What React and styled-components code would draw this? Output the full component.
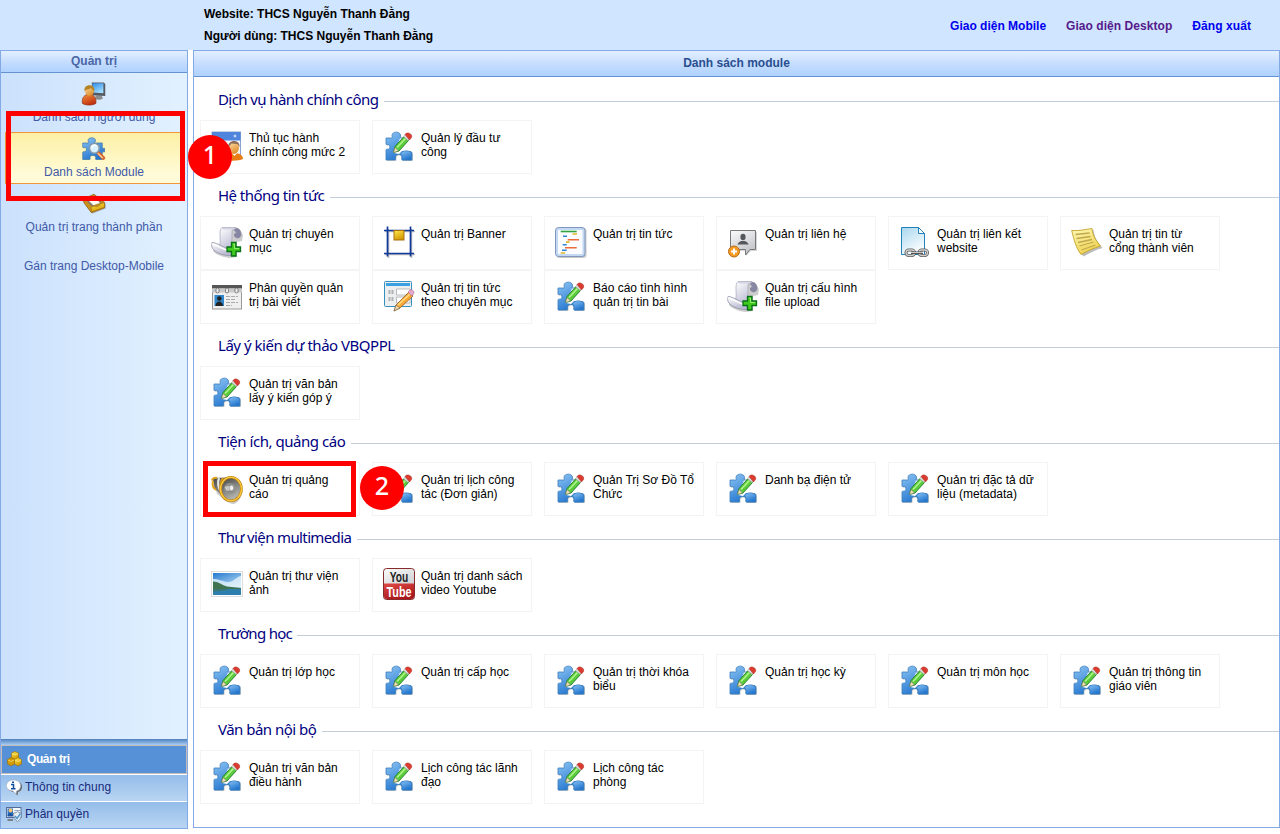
import React from "react";
import styled, { createGlobalStyle } from "styled-components";

const GlobalStyle = createGlobalStyle`
  *, *::before, *::after { box-sizing: border-box; }
  body { margin: 0; background: #fff; font: 12px/14px "Liberation Sans", Arial, sans-serif; color: #000; }
  a { text-decoration: none; color: inherit; }
`;

const Page = styled.div`
  position: relative;
  width: 1280px;
  height: 834px;
  overflow: hidden;
  display: flex;
  flex-direction: column;
`;
const Header = styled.header`
  height: 50px;
  flex: none;
  background: #d0e5ff;
  display: flex;
  justify-content: space-between;
  padding: 3px 29px 0 204px;
  font-weight: bold;
`;
const Identity = styled.div`
  line-height: 22px;
  white-space: nowrap;
`;
const Links = styled.nav`
  display: flex;
  gap: 20px;
  line-height: 46px;
`;
const HeaderLink = styled.a`
  color: ${(p) => (p.$visited ? "#551a8b" : "#0000ee")};
  letter-spacing: ${(p) => p.$track || 0}px;
`;
const Main = styled.div`
  display: flex;
  gap: 5px;
  align-items: flex-start;
`;
const Sidebar = styled.aside`
  width: 188px;
  height: 779px;
  flex: none;
  border: 1px solid #83aae6;
  display: flex;
  flex-direction: column;
`;
const PanelTitle = styled.h2`
  margin: 0;
  flex: none;
  height: ${(p) => p.$height}px;
  line-height: ${(p) => p.$line}px;
  border-bottom: 1px solid #6593cf;
  background: linear-gradient(#e3efff, #c4dcff 55%, #afd2ff);
  font-size: 12px;
  text-align: center;
  color: ${(p) => p.$color};
`;
const SideBody = styled.div`
  flex: 1;
  background: linear-gradient(90deg, #cbe1fc, #e2f1ff 100%);
  padding: 4px 4px 0;
  display: flex;
  flex-direction: column;
  gap: 3px;
`;
const SideItem = styled.a`
  height: ${(p) => (p.$plain ? 36 : 52)}px;
  padding-top: ${(p) => (p.$plain ? 16 : 4)}px;
  border: 1px solid ${(p) => (p.$active ? "#f29536" : "transparent")};
  background: ${(p) => (p.$active ? "linear-gradient(#fdf0a5, #fffbd9 85%)" : "none")};
  display: flex;
  flex-direction: column;
  align-items: center;
  gap: 4px;
  color: #4159a8;
`;
const Splitter = styled.div`
  height: 6px;
  background: linear-gradient(#4b80bd, #a9cdf4);
`;
const GroupTab = styled.a`
  height: ${(p) => (p.$active ? 29 : 27)}px;
  display: flex;
  align-items: center;
  gap: ${(p) => (p.$active ? 4 : 3)}px;
  letter-spacing: ${(p) => (p.$active ? -0.4 : 0)}px;
  padding: 0 0 2px 5px;
  border: solid ${(p) => (p.$active ? "#c5bcb5" : "#fff")};
  border-width: ${(p) => (p.$active ? "1px" : "1px 0 0")};
  background: ${(p) => (p.$active ? "#5690d6" : "linear-gradient(#94bdea, #b9d5f2)")};
  color: ${(p) => (p.$active ? "#fff" : "#18297c")};
  font-weight: ${(p) => (p.$active ? "bold" : "normal")};
`;
const Content = styled.main`
  flex: 1;
  height: 778px;
  border: 1px solid #83aae6;
  background: #fff;
`;
const Sections = styled.div`
  padding-top: 1px;
`;
const SectionTitle = styled.h3`
  height: 42px;
  margin: 0;
  padding: 1px 0 0 24px;
  display: flex;
  align-items: center;
  gap: 6px;
  font: 15px/20px "Noto Sans", "Open Sans", sans-serif;
  color: #000080;
  white-space: nowrap;
  &::after { content: ""; flex: 1; height: 1px; background: #c3cedc; margin-top: 4px; }
`;
const TitleText = styled.span`
  width: ${(p) => p.$width}px;
  letter-spacing: ${(p) => p.$track}px;
  margin-top: -2px;
`;
const Cards = styled.div`
  display: grid;
  grid-template-columns: repeat(6, 160px);
  column-gap: 12px;
  padding-left: 6px;
`;
const Card = styled.a`
  height: 54px;
  border: 1px solid #f4f4f4;
  padding: 9px 4px 0 10px;
  display: flex;
  gap: 6px;
`;
const CardText = styled.span`
  padding-top: 1px;
  white-space: pre-line;
`;
const Glyph = styled.svg`
  display: block;
  flex: none;
  overflow: visible;
`;
const Frame = styled.div`
  position: absolute;
  left: ${(p) => p.$x}px;
  top: ${(p) => p.$y}px;
  width: ${(p) => p.$w}px;
  height: ${(p) => p.$h}px;
  border: 5px solid #f00;
`;
const Badge = styled.div`
  position: absolute;
  left: ${(p) => p.$x}px;
  top: ${(p) => p.$y}px;
  width: 44px;
  height: 44px;
  border-radius: 50%;
  background: #f00;
  color: #fff;
  font: 500 25px/39px "Noto Sans", sans-serif;
  text-align: center;
`;
const Defs = styled.svg`
  position: absolute;
  width: 0;
  height: 0;
`;

const GRADIENTS = [
  ["blue", "#8cc4f4", "#2275cf"],
  ["gray", "#fbfbfb", "#c4c5c9"],
  ["scroll", "#ffffff", "#b9b9d2"],
  ["gold", "#ffe94d", "#d49a05"],
  ["orange", "#f7923b", "#bf3010"],
  ["skin", "#ffe3b4", "#e0912d"],
  ["screen", "#2f8ee8", "#9fdcff"],
  ["note", "#fffab8", "#f0d250"],
  ["doc", "#a9d7ee", "#fafdff"],
  ["dark", "#3f3f3f", "#b8b8b4"],
  ["red", "#e04a45", "#a9171c"],
  ["sky", "#2479cf", "#d6eefb"],
];

const PUZZLE_BODY = "M3 8h5.500c1.500 0 .5-1.500.5-2.500 0-4.500 8.500-4.500 8.500 0 0 1-1 2.500.5 2.500H27v8l-2 5c3 0 4 1 4 2.500V30h-9.500c-1 0-.5-1.500-.5-3 0-3.500-6.500-3.500-6.500 0 0 1.500.5 3-.5 3H3V20c0-1 1-.8 2-.8 2.500 0 2.500-4.700 0-4.700-1 0-2 .5-2-.5z";

const Puzzle = () => (
  <g>
    <path d={PUZZLE_BODY} fill="#666" opacity=".32" transform="translate(.9 1)" />
    <path d={PUZZLE_BODY} fill="url(#g-blue)" stroke="#3b7cba" strokeWidth=".8" />
    <path d="M17 8.600h11.500l.5 12.400H19l-3 3-5-1z" fill="#fff" />
    <path d="M18.500 22.500c3-2.500 8-2 10 .5V30h-9c-1 0-.5-1.500-.5-3 0-1.500-.5-2.500-1.500-3z" fill="url(#g-blue)" stroke="#3b7cba" strokeWidth=".7" />
    <path d="M10.500 22.500l1.500-6L21 6.500l4.500 4-9.500 10.500z" fill="#5bcb3e" stroke="#237c28" strokeWidth=".9" />
    <path d="M14 17.500l8.500-9" stroke="#b0f588" strokeWidth="1.600" />
    <path d="M10.500 22.500l1.500-5 3.500 3.300z" fill="#f5dfae" stroke="#777" strokeWidth=".5" />
    <path d="M20.500 6.500l2-2 4.500 4-2 2z" fill="#ddd" stroke="#999" strokeWidth=".5" />
    <path d="M22 4.500c2-3.500 8-.5 6.500 3L26.500 10z" fill="#dc3c2e" stroke="#a22f25" strokeWidth=".5" />
  </g>
);

const ICONS = {
  puzzle: Puzzle,
  procedure: () => (
    <g>
      <rect x="1" y="2" width="28.500" height="27" fill="#f2f5fa" stroke="#8ba3cf" />
      <rect x="1" y="2" width="28.500" height="8.500" fill="#4f85dc" />
      <path d="M24 4.500v3M22.500 6h3" stroke="#fff" strokeWidth=".8" />
      <path d="M14 30c0-5 4-7 9-7s9 2 9 6c-4 2-12 2-18 1z" fill="#e87d16" />
      <path d="M20 22h7l-3.500 4z" fill="#fff" />
      <ellipse cx="23" cy="17.500" rx="5" ry="6.500" fill="url(#g-skin)" />
      <path d="M17.500 17c-1-8 12-8 11 0l-2-3-6-.5z" fill="#8d6c58" />
    </g>
  ),
  scroll: () => (
    <g>
      <path d="M1 19l7-1L9 3l18-1 4 6-1 6-5 1v15l-8 1C10 30 3 27 1 24z" fill="#555" opacity=".3" transform="translate(1 1)" />
      <path d="M22 3c6-3 9 3 7.500 7-1.500 3-6 2-6-1 0-2 2-2.500 3-1" fill="#8787a5" stroke="#7d7d99" strokeWidth=".8" />
      <path d="M8.500 20C10.500 13 7 5 11 1.500h14c-5 1-4 5-4 9 0 7-1 10-1 16z" fill="url(#g-scroll)" stroke="#a5a5bb" strokeWidth=".7" />
      <path d="M11 2h14l-2 1.500H12z" fill="#d4d4e2" />
      <path d="M1 16.500c5 0 13 6 19 7v6C12 30 2 26 .7 20.500z" fill="url(#g-scroll)" stroke="#9292ab" strokeWidth=".8" />
      <path d="M1 18c5 1 11 6 18 7" fill="none" stroke="#fff" strokeWidth="1.500" />
      <path d="M20.500 16.500h4.500V21h4.500v4.500H25V30h-4.500v-4.500H16V21h4.500z" fill="#3fca1c" stroke="#087018" strokeWidth="1.300" />
      <path d="M22 18h1.500v4.500H28" fill="none" stroke="#97ee70" />
    </g>
  ),
  banner: () => (
    <g fill="none">
      <path d="M4.500 2v29M27.500 2v29M1 4.500h30M1 27.500h30" stroke="#bbb" strokeWidth="1.500" transform="translate(1 1)" />
      <path d="M4.500 .5v30M27.500 .5v30M1 4.500h30M1 27.500h30" stroke="#113b9b" strokeWidth="1.700" />
      <rect x="11" y="4.500" width="10" height="9.500" fill="url(#g-gold)" stroke="#a96e10" />
    </g>
  ),
  news: () => (
    <g>
      <rect x="1.500" y="2" width="30" height="30" rx="3" fill="#888" opacity=".45" />
      <rect x=".5" y="1.500" width="29.500" height="29" rx="3" fill="#c3d8f3" stroke="#7f97bd" />
      <rect x="3" y="4" width="24.500" height="24" rx="1" fill="#fafcff" />
      <path d="M5.700 5.500h16" stroke="#2fa340" strokeWidth="1.600" />
      <path d="M8 10.300h4M7.700 18.700h4M7 24.300h4.700" stroke="#2c86d4" strokeWidth="1.600" />
      <path d="M12.700 13.700H24M10 21.700h11.700" stroke="#ec6a35" strokeWidth="1.600" />
      <path d="M17.500 8h4.500M11 16.200h3.500M5.700 27h4.500" stroke="#e2b62d" strokeWidth="1.700" />
    </g>
  ),
  contact: () => (
    <g>
      <path d="M3 5h26v19h-6l-5 5v-5H3z" fill="#888" opacity=".35" transform="translate(1 1)" />
      <path d="M3.500 4.500h25v19H23L18.500 29v-5.500h-15z" fill="url(#g-gray)" stroke="#77797d" />
      <ellipse cx="16" cy="11" rx="2.600" ry="3.200" fill="#54575b" />
      <path d="M10.500 18.500c0-1.500 2-3 4-3.500h3c2 .5 4 2 4 3.500z" fill="#54575b" />
      <circle cx="7" cy="25.500" r="5.500" fill="#f69a24" stroke="#b96d1b" />
      <path d="M7 22.500v6M4 25.500h6" stroke="#fff" strokeWidth="2" />
    </g>
  ),
  link: () => (
    <g>
      <path d="M2.500 1.500h17l6 6v21h-23z" fill="url(#g-doc)" stroke="#2481b9" />
      <path d="M19.500 1.500v6h6z" fill="#fff" stroke="#2481b9" />
      <g fill="none" stroke="#5c5c5c" strokeWidth="3">
        <rect x="7" y="24" width="8.500" height="5.500" rx="2.700" />
        <rect x="20" y="24" width="8.500" height="5.500" rx="2.700" />
      </g>
      <g fill="none" stroke="#d0d0d0" strokeWidth="1.300">
        <rect x="7" y="24" width="8.500" height="5.500" rx="2.700" />
        <rect x="20" y="24" width="8.500" height="5.500" rx="2.700" />
      </g>
      <path d="M12 26.700h12" stroke="#505050" strokeWidth="2.500" />
      <path d="M12 26.500h12" stroke="#ccc" />
    </g>
  ),
  note: () => (
    <g>
      <path d="M1 4.500c8 1 13-1 20-1.500 1 8 4 12 9 18-7 2-13 5-19 8.500C6 24 2 16 1 4.500z" fill="#555" opacity=".4" transform="translate(1.500 1)" />
      <path d="M.7 4.500c8 .5 13-1 20.300-2 1 8 4 12 8.500 17.500-7 2-13 5-19.500 8.500C5 22 3 14 .7 4.500z" fill="url(#g-note)" stroke="#c2a428" strokeWidth=".9" />
      <path d="M4.500 8.500l14-1.500M5.500 12.500l14-2M7 16.500l14-3M8.500 20l14-4M10.500 24l14-5" fill="none" stroke="#bfa850" strokeWidth="1.300" />
    </g>
  ),
  permission: () => (
    <g>
      <rect x="1.500" y="5.500" width="29" height="23.500" fill="#efefef" stroke="#999" />
      <rect x="1" y="5" width="30" height="3.500" fill="#555" />
      <rect x="1" y="8.500" width="30" height="4" fill="#c9c9c9" />
      <g fill="#eee" stroke="#555" strokeWidth=".7"><rect x="5" y="8" width="3" height="5" rx="1.500" /><rect x="14.500" y="8" width="3" height="5" rx="1.500" /><rect x="24" y="8" width="3" height="5" rx="1.500" /></g>
      <rect x="3.500" y="15" width="9.500" height="11" fill="#3187cb" />
      <circle cx="8.300" cy="18.500" r="2.300" fill="#222" /><path d="M4.500 26c0-6 7.500-6 7.500 0z" fill="#222" />
      <path d="M15 16.500h12M15 19.500h10M15 22.500h12M15 25.500h6" stroke="#aaa" strokeDasharray="4 1" />
    </g>
  ),
  form: () => (
    <g>
      <rect x="1.500" y="1.500" width="27" height="25" rx="1" fill="#eceeef" stroke="#3490be" />
      <rect x="3" y="3" width="24" height="3" fill="#3aa0e2" />
      <path d="M13.500 9H27v6H13.500zM13.500 17H27v6H13.500z" fill="#fff" stroke="#bbb" />
      <path d="M5.500 11h5M5.500 13h5M5.500 18h5M5.500 20h5" stroke="#777" strokeDasharray="2 1" />
      <path d="M11 31l2-6L26 12l4 4-13 12z" fill="#f9a835" stroke="#965d25" strokeWidth=".8" />
      <path d="M15 25l12-11" stroke="#ffdf86" strokeWidth="1.300" />
      <path d="M11 31l2-6 4 3z" fill="#efd6a5" stroke="#555" strokeWidth=".5" />
      <path d="M25 12l2-2c3-1 5 2 3.500 4l-2 2z" fill="#e7a7cc" stroke="#966783" strokeWidth=".5" />
    </g>
  ),
  horn: () => (
    <g>
      <path d="M2 6l18 0c14 3 14 20 3 25-7 0-12-7-17-10z" fill="#555" opacity=".3" transform="translate(0 1)" />
      <path d="M2 6c5 0 11 .5 18-1v24C13 27 9 20 4 17z" fill="url(#g-dark)" stroke="#555" strokeWidth=".6" />
      <path d="M8 6c-1.500 4-1 9 2 14" fill="none" stroke="#e8e8e4" strokeWidth="2.200" />
      <path d="M1 8.500c0-2 2-3 5-2.500M2 9c-1 4 0 7 3 9" fill="none" stroke="#e3a51b" strokeWidth="2" />
      <path d="M12 6C8 12 9 20 15 27" fill="none" stroke="#e3a51b" strokeWidth="2" />
      <ellipse cx="20" cy="17" rx="10.500" ry="11.700" fill="url(#g-dark)" stroke="#b87805" strokeWidth="2.600" />
      <ellipse cx="20" cy="17" rx="10.500" ry="11.700" fill="none" stroke="#f9c83d" strokeWidth="1.500" />
      <ellipse cx="19" cy="16.500" rx="6" ry="5.500" fill="#92928e" />
      <path d="M13 14.500l7-1.500c3 0 3.500 5 .5 6l-5.500 0z" fill="#c9c9c6" stroke="#666" strokeWidth=".5" />
      <ellipse cx="20.500" cy="16" rx="2.300" ry="2.800" fill="#eee" stroke="#777" strokeWidth=".5" />
    </g>
  ),
  photo: () => (
    <g>
      <rect x=".5" y="3.500" width="31" height="25" fill="#fff" stroke="#dedede" />
      <rect x="2" y="5" width="28" height="22" fill="url(#g-sky)" />
      <path d="M2 11c6 0 8 2 14 3s10-6 14-6v11H2z" fill="#e8f6fc" opacity=".75" />
      <path d="M2 13.500c5 0 8 3 14 5l14 1.500v2H2z" fill="#3f7352" />
      <path d="M2 21h28v6H2z" fill="#2f7fae" />
      <path d="M2 20c6 0 10 1 16 2l-16 1.500z" fill="#3f7352" opacity=".7" />
    </g>
  ),
  youtube: () => (
    <g>
      <rect x=".5" y=".5" width="31" height="31" rx="3" fill="url(#g-gray)" stroke="#852b2b" />
      <path d="M1 15.500h30V28q0 3-3 3H4q-3 0-3-3z" fill="url(#g-red)" />
      <text x="16" y="13.700" textAnchor="middle" textLength="18.500" lengthAdjust="spacingAndGlyphs" fontFamily="Liberation Sans, sans-serif" fontSize="15" fontWeight="bold" fill="#222">You</text>
      <text x="16" y="29" textAnchor="middle" textLength="25" lengthAdjust="spacingAndGlyphs" fontFamily="Liberation Sans, sans-serif" fontSize="15" fontWeight="bold" fill="#fff">Tube</text>
    </g>
  ),
  user: () => (
    <g>
      <path d="M18 18h8l2 4c-3 2-7 2-10 1z" fill="#8d8d8d" />
      <path d="M13 .5h16l2 2v16l-17-1z" fill="#555a62" />
      <path d="M14 1.500h14.500v13.500L14 14z" fill="url(#g-screen)" />
      <path d="M.5 28.500c-1-8 3-12 9-12s10 4 9 12c-5 3-13 3-18 0z" fill="url(#g-orange)" stroke="#97351a" />
      <ellipse cx="10" cy="11.500" rx="6" ry="7" fill="url(#g-skin)" />
      <path d="M3.500 12.500C1 1.500 18 1.500 16.500 12c-3-1-3-3-5-4-2 3-6 1-8 4.500z" fill="#b58425" />
    </g>
  ),
  module: () => (
    <g>
      <path d="M1 8h7c2 0 0-2 0-3.500C8 0 18 0 18 4.500 18 6 16 8 18 8h9v6c0 2 1 1 3 1v5c-2 0-3-1-3 1v9h-8c-2 0 0-2-1-4-1.500-2-6-2-7 0-1 2 1 4-1 4H1v-9c0-2 1-1 3-1.500 3-1 2-6 0-5.500-2 0-3 1-3-1z" fill="url(#g-blue)" stroke="#4277a5" />
      <path d="M21.500 21l7 7" stroke="#d9662b" strokeWidth="5" strokeLinecap="round" />
      <path d="M21 21.500l6.500 6.500" stroke="#ffd7a0" strokeWidth="1.700" />
      <circle cx="16.500" cy="15" r="6.500" fill="#d9f1ff" stroke="#8398a8" strokeWidth="2" />
      <path d="M12.500 14.500c1-4 5-5 7-2" stroke="#fff" strokeWidth="2" fill="none" />
    </g>
  ),
  tray: () => (
    <g>
      <path d="M1 10L15 3l16 12v6l-18 7z" fill="#666" opacity=".35" transform="translate(1 1)" />
      <path d="M1 9.500L16 3l14 11v7l-17.500 6.500L3 15z" fill="#c8901c" stroke="#8b5d10" />
      <path d="M4 9.500L16 5l10 9-13 5z" fill="#7d7870" />
      <path d="M8 10.500l10-3 6 7-9 3z" fill="#fffdf3" />
      <path d="M12 20l5-1.500 2 1 4-1.500 1-2 6-2v6.500l-17 6z" fill="url(#g-gold)" stroke="#9b6912" strokeWidth=".8" />
    </g>
  ),
  boxes: () => (
    <g fill="url(#g-gold)" stroke="#9a6f0a" strokeWidth="1.300">
      <path d="M9 4l7-3 7 3v10l-7 3-7-3z" /><path d="M1 17l7-4 7 4v9l-7 4-7-4z" fill="#d49a05" /><path d="M15 17l7-4 7 4v9l-7 4-7-4z" />
      <path d="M10 5l6 3 6-3M2 18l6 3 6-3M16 18l6 3 6-3" fill="none" stroke="#fff494" />
    </g>
  ),
  info: () => (
    <g>
      <path d="M15 3c19-1 19 20 7 22l-1 7-7-7C-3 23-2 4 15 3z" fill="#666" transform="translate(2 1)" />
      <path d="M14 2c19-1 19 20 7 22l-1 6-6-6C-4 23-3 3 14 2z" fill="#fff" stroke="#a4b0c7" strokeWidth="1.500" />
      <path d="M12 6.500h4M10 11h5v8M10 19.500h9" fill="none" stroke="#124e9e" strokeWidth="3" />
    </g>
  ),
  rights: () => (
    <g>
      <rect x="1" y="3" width="29" height="20" fill="#f4f8ff" stroke="#536c9c" strokeWidth="2" />
      <rect x="3" y="5" width="11" height="15" fill="#2673c7" /><circle cx="9" cy="9" r="4" fill="#f5c16a" /><path d="M3 21c0-9 11-9 11 0z" fill="#1d539d" />
      <path d="M17 9h11M17 14h9" stroke="#8fa6c6" strokeWidth="2" />
      <path d="M15 14c6 0 8-3 8-3 3 3 8 3 8 3 0 9-3 14-8 17-5-3-8-8-8-17z" fill="#e9f0f8" stroke="#667892" strokeWidth="1.500" />
      <path d="M18 20l4 5 7-10" fill="none" stroke="#4c96d1" strokeWidth="3" /><path d="M3 28h11" stroke="#6a6a6a" strokeWidth="3" />
    </g>
  ),
};

const Icon = ({ name, size = 32 }) => {
  const Shape = ICONS[name];
  return <Glyph width={size} height={size} viewBox="0 0 32 32"><Shape /></Glyph>;
};

const SECTIONS = [
  { title: "Dịch vụ hành chính công", width: 160, track: -0.58, items: [["procedure", "Thủ tục hành\nchính công mức 2"], ["puzzle", "Quản lý đầu tư\ncông"]] },
  { title: "Hệ thống tin tức", width: 106, track: -0.54, items: [
    ["scroll", "Quản trị chuyên\nmục"], ["banner", "Quản trị Banner"], ["news", "Quản trị tin tức"], ["contact", "Quản trị liên hệ"], ["link", "Quản trị liên kết\nwebsite"], ["note", "Quản trị tin từ\ncổng thành viên"],
    ["permission", "Phân quyền quản\ntrị bài viết"], ["form", "Quản trị tin tức\ntheo chuyên mục"], ["puzzle", "Báo cáo tình hình\nquản trị tin bài"], ["scroll", "Quản trị cấu hình\nfile upload"]] },
  { title: "Lấy ý kiến dự thảo VBQPPL", width: 176, track: -0.48, items: [["puzzle", "Quản trị văn bản\nlấy ý kiến góp ý"]] },
  { title: "Tiện ích, quảng cáo", width: 127, track: -0.46, items: [["horn", "Quản trị quảng\ncáo"], ["puzzle", "Quản trị lịch công\ntác (Đơn giản)"], ["puzzle", "Quản Trị Sơ Đồ Tổ\nChức"], ["puzzle", "Danh bạ điện tử"], ["puzzle", "Quản trị đặc tả dữ\nliệu (metadata)"]] },
  { title: "Thư viện multimedia", width: 133, track: -0.63, items: [["photo", "Quản trị thư viện\nảnh"], ["youtube", "Quản trị danh sách\nvideo Youtube"]] },
  { title: "Trường học", width: 73, track: -0.7, items: [["puzzle", "Quản trị lớp học"], ["puzzle", "Quản trị cấp học"], ["puzzle", "Quản trị thời khóa\nbiểu"], ["puzzle", "Quản trị học kỳ"], ["puzzle", "Quản trị môn học"], ["puzzle", "Quản trị thông tin\ngiáo viên"]] },
  { title: "Văn bản nội bộ", width: 98, track: -0.52, items: [["puzzle", "Quản trị văn bản\nđiều hành"], ["puzzle", "Lịch công tác lãnh\nđạo"], ["puzzle", "Lịch công tác\nphòng"]] },
];

export default function App() {
  return (
    <Page>
      <GlobalStyle />
      <Defs>
        <defs>
          {GRADIENTS.map(([id, a, b]) => (
            <linearGradient key={id} id={`g-${id}`} x1="0" y1="0" x2=".5" y2="1">
              <stop offset="0" stopColor={a} /><stop offset="1" stopColor={b} />
            </linearGradient>
          ))}
        </defs>
      </Defs>
      <Header>
        <Identity>
          <div>Website: THCS Nguyễn Thanh Đằng</div>
          <div>Người dùng: THCS Nguyễn Thanh Đằng</div>
        </Identity>
        <Links>
          <HeaderLink>Giao diện Mobile</HeaderLink>
          <HeaderLink $visited $track={0.05}>Giao diện Desktop</HeaderLink>
          <HeaderLink $track={0.08}>Đăng xuất</HeaderLink>
        </Links>
      </Header>
      <Main>
        <Sidebar>
          <PanelTitle $height={22} $line={20} $color="#4a66a5">Quản trị</PanelTitle>
          <SideBody>
            <SideItem><Icon name="user" size={24} />Danh sách người dùng</SideItem>
            <SideItem $active><Icon name="module" size={24} />Danh sách Module</SideItem>
            <SideItem><Icon name="tray" size={24} />Quản trị trang thành phần</SideItem>
            <SideItem $plain>Gán trang Desktop-Mobile</SideItem>
          </SideBody>
          <Splitter />
          <GroupTab $active><Icon name="boxes" size={16} />Quản trị</GroupTab>
          <GroupTab><Icon name="info" size={16} />Thông tin chung</GroupTab>
          <GroupTab><Icon name="rights" size={16} />Phân quyền</GroupTab>
        </Sidebar>
        <Content>
          <PanelTitle $height={26} $line={25} $color="#2a4f8f">Danh sách module</PanelTitle>
          <Sections>
            {SECTIONS.map((section) => (
              <section key={section.title}>
                <SectionTitle><TitleText $width={section.width} $track={section.track}>{section.title}</TitleText></SectionTitle>
                <Cards>
                  {section.items.map(([icon, label]) => (
                    <Card key={label}><Icon name={icon} /><CardText>{label}</CardText></Card>
                  ))}
                </Cards>
              </section>
            ))}
          </Sections>
        </Content>
      </Main>
      <Frame $x={6} $y={111} $w={179} $h={90} />
      <Frame $x={203} $y={461} $w={153} $h={56} />
      <Badge $x={188} $y={135}>1</Badge>
      <Badge $x={360} $y={466}>2</Badge>
    </Page>
  );
}
